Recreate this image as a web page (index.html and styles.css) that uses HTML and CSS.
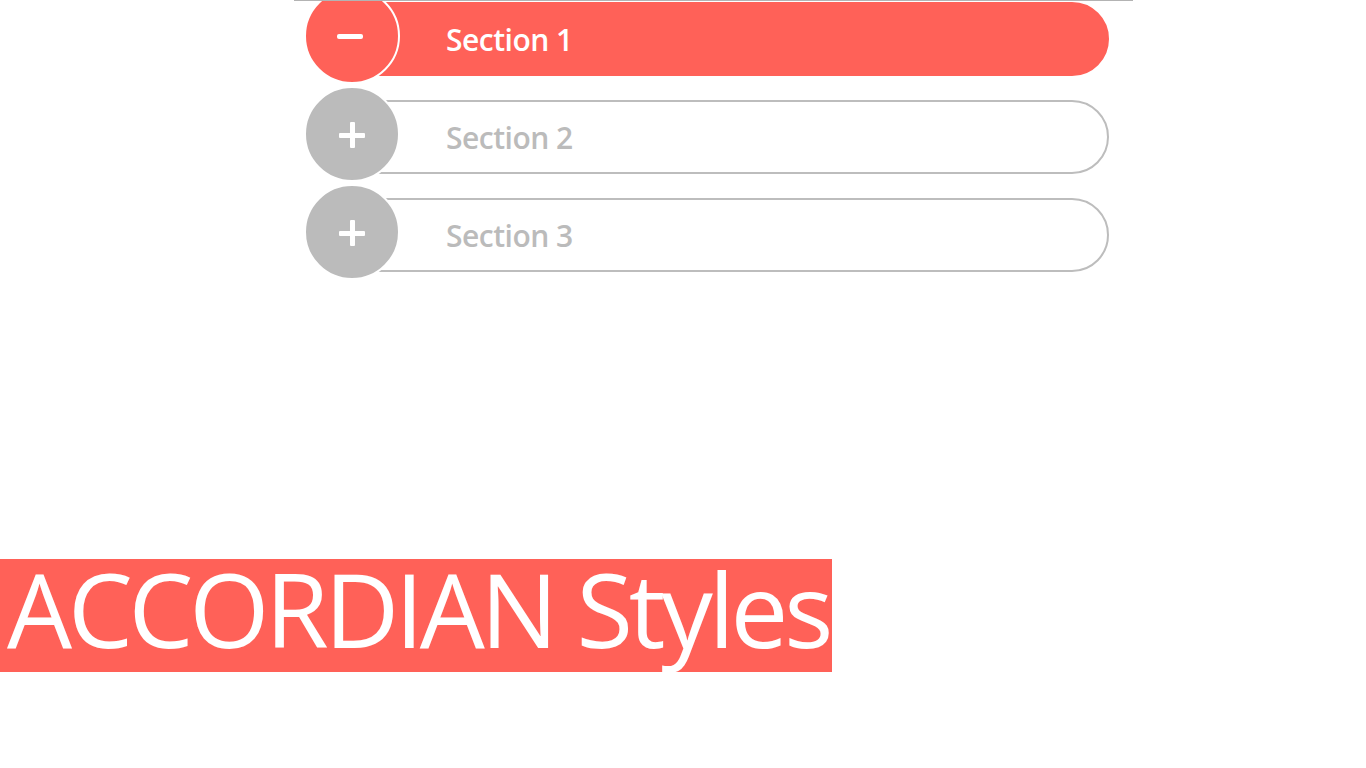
FILE: index.html
```html
<!DOCTYPE html>
<html lang="en">
<head>
<meta charset="utf-8">
<title>Accordian Styles</title>
<link rel="stylesheet" href="styles.css">
</head>
<body>
<div class="page">
  <div class="accordion">
    <div class="item active">
      <div class="toggle"><span class="minus"></span></div>
      <div class="bar"><span class="label">Section 1</span></div>
    </div>
    <div class="item">
      <div class="toggle"><span class="plus"></span></div>
      <div class="bar"><span class="label">Section 2</span></div>
    </div>
    <div class="item">
      <div class="toggle"><span class="plus"></span></div>
      <div class="bar"><span class="label">Section 3</span></div>
    </div>
  </div>
  <h1 class="title">ACCORDIAN Styles</h1>
</div>
</body>
</html>
```
FILE: styles.css
```css
html, body {
  margin: 0;
  padding: 0;
  background: #ffffff;
}
body {
  font-family: "Open Sans", "Noto Sans", sans-serif;
}
.page {
  display: flex;
  flex-direction: column;
  align-items: flex-start;
}
.accordion {
  margin-left: 294px;
  width: 839px;
  box-sizing: border-box;
  border-top: 1px solid #b3b3b3;
  padding: 0 24px 0 10px;
  display: flex;
  flex-direction: column;
  gap: 2px;
  overflow: hidden;
}
.item {
  display: flex;
  align-items: flex-start;
}
.item:first-child {
  margin-top: -13px;
}
.toggle {
  position: relative;
  z-index: 1;
  flex: none;
  width: 96px;
  height: 96px;
  box-sizing: border-box;
  border: 2px solid #ffffff;
  border-radius: 50%;
  background: #bbbbbb;
  display: flex;
  align-items: center;
  justify-content: center;
}
.active .toggle {
  background: #ff6158;
}
.minus {
  display: block;
  width: 26px;
  height: 5px;
  border-radius: 2px;
  background: #ffffff;
  margin-right: 4px;
}
.plus {
  display: block;
  position: relative;
  width: 26px;
  height: 26px;
  margin-top: 2px;
}
.plus::before,
.plus::after {
  content: "";
  position: absolute;
  background: #ffffff;
  border-radius: 1px;
}
.plus::before {
  left: 0;
  top: 10.5px;
  width: 26px;
  height: 5px;
}
.plus::after {
  left: 10.5px;
  top: 0;
  width: 5px;
  height: 26px;
}
.bar {
  flex: 1;
  margin-left: -48px;
  margin-top: 14px;
  height: 74px;
  box-sizing: border-box;
  border: 2px solid #bdbdbd;
  border-radius: 0 37px 37px 0;
  display: flex;
  align-items: center;
  padding-left: 92px;
  background: #ffffff;
}
.active .bar {
  background: #ff6158;
  border-color: #ff6158;
}
.label {
  font-family: "Open Sans", "Noto Sans", sans-serif;
  font-weight: 600;
  font-size: 30px;
  letter-spacing: -0.5px;
  color: #bbbbbb;
  line-height: 1;
  padding-top: 1px;
}
.active .label {
  color: #ffffff;
}
.title {
  margin: 279px 0 0 0;
  background: #ff6158;
  color: #ffffff;
  font-family: "Open Sans", "Noto Sans", sans-serif;
  font-weight: 400;
  font-size: 103px;
  letter-spacing: -4.2px;
  line-height: 99px;
  padding: 0 3px 14px 7px;
  white-space: nowrap;
}
```
